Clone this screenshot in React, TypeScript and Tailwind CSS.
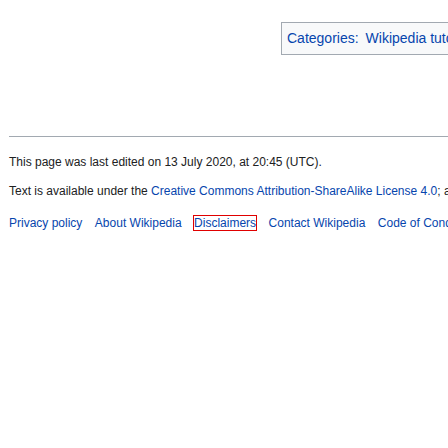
const links = ["Privacy policy", "About Wikipedia", "Disclaimers", "Contact Wikipedia", "Code of Conduct", "Developers", "Statistics"];

export default function App() {
  return (
    <div
      className="w-[448px] h-[448px] overflow-hidden bg-white text-[#202122]"
      style={{ fontFamily: '"Liberation Sans", Arial, sans-serif' }}
    >
      {/* category box */}
      <div className="mt-[22px] ml-[281px] w-[700px] border border-[#a2a9b1] bg-[#f8f9fa] p-[5px] text-[14px] leading-[21px] whitespace-nowrap">
        <a className="text-[#0645ad]">Categories:</a>
        <span className="ml-[7px] text-[#0645ad]">Wikipedia tutorials</span>
      </div>

      <div className="mt-[81px] ml-[9px] w-[800px] h-px bg-[#a2a9b1]" />

      <ul className="ml-[9px] w-[900px] text-[12px] leading-[17px] whitespace-nowrap">
        <li className="mt-[17px]">This page was last edited on 13 July 2020, at 20:45 (UTC).</li>
        <li className="mt-[12px]">
          Text is available under the{" "}
          <a className="text-[#0645ad]">Creative Commons Attribution-ShareAlike License 4.0</a>; additional terms may apply.
        </li>
        <li className="mt-[15px]">
          {links.map((l) => (
            <a
              key={l}
              className={
                l === "Disclaimers"
                  ? "inline mr-[12.5px] text-[#0645ad] outline outline-1 outline-[#e00000]"
                  : "inline mr-[12.5px] text-[#0645ad]"
              }
            >
              {l}
            </a>
          ))}
        </li>
      </ul>
    </div>
  );
}
